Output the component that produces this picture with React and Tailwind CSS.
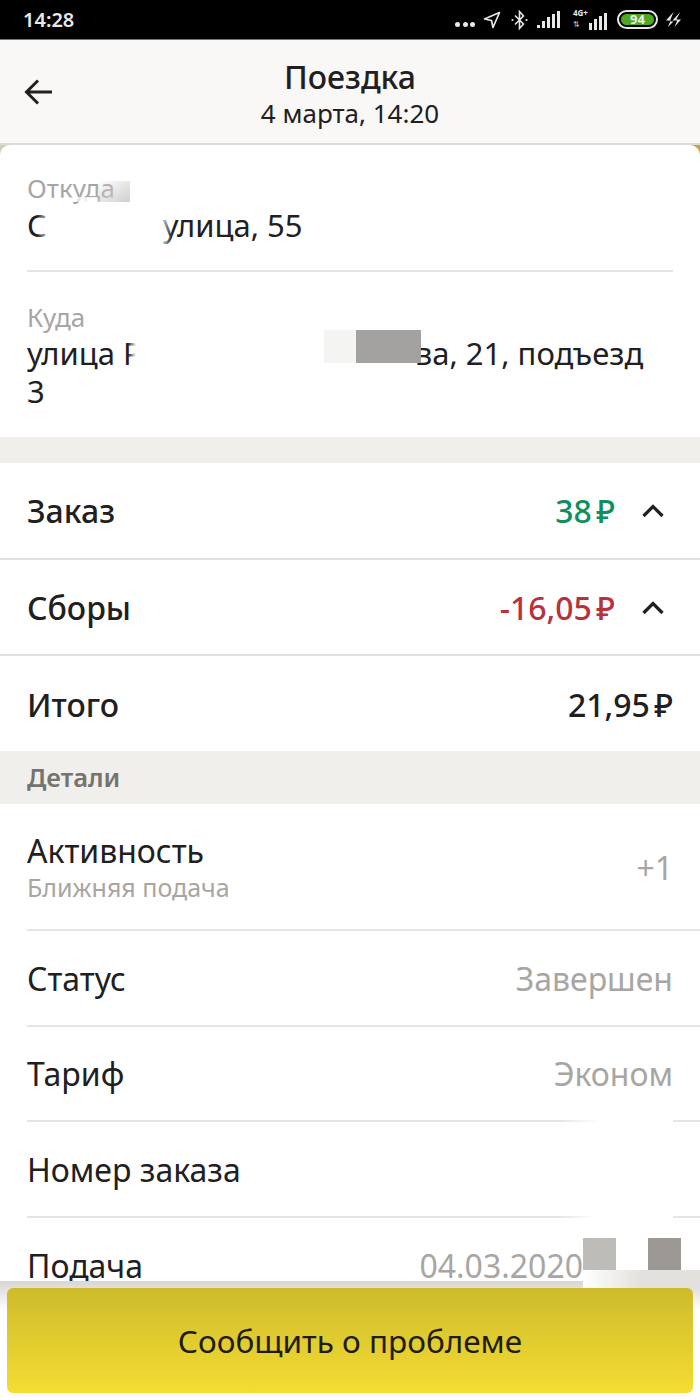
import React from 'react'

const font = { fontFamily: '"Noto Sans", sans-serif' }

function Blur({ className }) {
  return <div className={`absolute ${className}`} />
}

function Chevron() {
  return (
    <svg width="24" height="16" viewBox="0 0 24 16" className="ml-[26px] mr-[8px] shrink-0" fill="none" stroke="#21201f" strokeWidth="3.2">
      <path d="M2.5 13 L12 3.5 L21.5 13" />
    </svg>
  )
}

function Signal({ bars = 5, className = '' }) {
  const heights = ['h-[3px]', 'h-[7px]', 'h-[11px]', 'h-[14px]', 'h-[17px]'].slice(5 - bars)
  return (
    <div className={`flex items-end gap-[2px] h-[17px] ${className}`}>
      {heights.map(h => <span key={h} className={`w-[3px] bg-[#e8e8e8] ${h}`} />)}
    </div>
  )
}

function StatusBar() {
  return (
    <div className="h-10 bg-black flex items-center justify-between pl-[23px] pr-[18px] text-[#e8e8e8] border-b border-[#777]">
      <span className="text-[20px] font-semibold leading-none">14:28</span>
      <div className="flex items-center">
        <div className="flex gap-[2.5px] mt-[10px]">
          <span className="w-[5px] h-[5px] rounded-full bg-[#e8e8e8]" />
          <span className="w-[5px] h-[5px] rounded-full bg-[#e8e8e8]" />
          <span className="w-[5px] h-[5px] rounded-full bg-[#e8e8e8]" />
        </div>
        <svg width="18" height="18" viewBox="0 0 18 18" className="ml-[8px]" fill="none" stroke="#e8e8e8" strokeWidth="1.7">
          <path d="M16.5 1.5 L1.5 8 L8.5 9.5 L10 16.5 Z" strokeLinejoin="round" />
        </svg>
        <svg width="17" height="22" viewBox="0 0 17 22" className="ml-[10px]" fill="none" stroke="#e8e8e8" strokeWidth="1.6">
          <path d="M4 6.5 L12.5 15 L8.5 19.5 V2.5 L12.5 7 L4 15.5" />
          <circle cx="1.5" cy="11" r="1.1" fill="#e8e8e8" stroke="none" />
          <circle cx="15.5" cy="11" r="1.1" fill="#e8e8e8" stroke="none" />
        </svg>
        <Signal className="ml-[9px]" />
        <div className="ml-[12px] relative w-[35px] h-[20px]">
          <span className="absolute left-[1px] top-[-2px] text-[8px] font-bold leading-[10px] text-[#e8e8e8]">4G+</span>
          <span className="absolute left-[1px] top-[9px] text-[8px] leading-[9px] text-[#bbb]">⇅</span>
          <Signal bars={4} className="absolute right-0 bottom-0" />
        </div>
        <div className="ml-[10px] w-[41px] h-[19px] rounded-full border-2 border-[#e8e8e8] flex items-center justify-center p-[2px]">
          <div className="w-full h-full rounded-full bg-[#4ea821] flex items-center justify-center text-[13px] font-bold text-[#eee] leading-none">94</div>
        </div>
        <svg width="17" height="17" viewBox="0 0 18 18" className="ml-[7px]" fill="#e8e8e8">
          <path d="M9 1 L1 10 H6 L3 17 L9 11 H5 Z" />
          <path d="M16 1 L8 10 H13 L10 17 L17 9 H12 Z" />
        </svg>
      </div>
    </div>
  )
}

function MoneyRow({ label, value, color, open }) {
  return (
    <div className="flex items-center h-[96.5px] pt-[2px] pl-[27px] pr-[27px] border-b-2 border-[#e2e1dd]">
      <span className="text-[32px] font-medium text-[#21201f] flex-1">{label}</span>
      <span className={`text-[32px] font-medium [word-spacing:-4px] ${color}`}>{value}</span>
      {open && <Chevron />}
    </div>
  )
}

function DetailRow({ label, sub, value, last, valueGap = 'pr-[27px]' }) {
  return (
    <div className={`ml-[27px] flex items-center justify-between pt-[2px] ${last ? '' : 'border-b-2 border-[#e6e5e2]'} ${sub ? 'h-[127px]' : 'h-[95.5px]'}`}>
      <div>
        <div className="text-[32px] leading-[38px] text-[#21201f]">{label}</div>
        {sub && <div className="text-[25px] leading-[34px] text-[#a8a6a3]">{sub}</div>}
      </div>
      <span className={`text-[32px] text-[#a8a6a3] ${valueGap}`}>{value}</span>
    </div>
  )
}

export default function App() {
  return (
    <div className="relative w-[700px] h-[1400px] overflow-hidden bg-white" style={font}>
      <StatusBar />

      {/* Header */}
      <div className="relative h-[105px] bg-[#f9f8f6] border-b-2 border-[#dddcd6] flex flex-col items-center pt-[17px]">
        <svg width="30" height="30" viewBox="0 0 30 30" className="absolute left-[24px] top-[37px]" fill="none" stroke="#21201f" strokeWidth="3">
          <path d="M28 15 H3 M14 3.5 L2.5 15 L14 26.5" />
        </svg>
        <div className="text-[32px] leading-[40px] font-medium text-[#21201f]">Поездка</div>
        <div className="text-[26px] leading-[32px] text-[#21201f]">4 марта, 14:20</div>
      </div>

      {/* Addresses, the map shows through at the rounded corners */}
      <div className="bg-gradient-to-r from-[#cfd0bc] via-white to-[#c9a23e]">
        <div className="relative rounded-t-[10px] bg-white">
          <div className="mx-[27px] h-[127px] pt-[27px] border-b-2 border-[#e6e5e2]">
            <div className="text-[26px] leading-[32px] text-[#a8a6a3]">Откуда</div>
            <div className="text-[31px] leading-[42px] text-[#21201f]">
              С<span className="inline-block w-[116px]" />улица, 55
            </div>
          </div>
          <div className="mx-[27px] h-[165px] pt-[28px] pr-[20px]">
            <div className="text-[26px] leading-[34px] text-[#a8a6a3]">Куда</div>
            <div className="text-[31px] leading-[38px] text-[#21201f]">
              улица Р<span className="inline-block w-[273px]" />ва, 21, подъезд 3
            </div>
          </div>
          {/* Smudged parts of the addresses */}
          <Blur className="left-[45px] top-[52px] w-[52px] h-[5px] bg-gradient-to-r from-transparent to-white" />
          <Blur className="left-[97px] top-[36px] w-[33px] h-[21px] bg-gradient-to-br from-transparent to-[#cfcfcd]" />
          <Blur className="left-[37px] top-[60px] w-[14px] h-[44px] bg-gradient-to-r from-transparent to-white" />
          <Blur className="left-[160px] top-[60px] w-[12px] h-[44px] bg-gradient-to-r from-white to-transparent" />
          <Blur className="left-[128px] top-[186px] w-[20px] h-[40px] bg-gradient-to-r from-transparent to-white to-[40%]" />
          <Blur className="left-[324px] top-[185px] w-[32px] h-[33px] bg-[#f4f4f3]" />
          <Blur className="left-[356px] top-[185px] w-[65px] h-[33px] bg-[#a3a2a0]" />
        </div>
      </div>

      <div className="h-[26px] bg-[#f0efec]" />

      <MoneyRow label="Заказ" value="38 ₽" color="text-[#0e8f5c]" open />
      <MoneyRow label="Сборы" value="-16,05 ₽" color="text-[#b8323a]" open />
      <div className="flex items-center justify-between h-[95px] pt-[2px] px-[27px]">
        <span className="text-[32px] font-medium text-[#21201f]">Итого</span>
        <span className="text-[32px] font-medium [word-spacing:-4px] text-[#21201f]">21,95 ₽</span>
      </div>

      <div className="h-[53px] bg-[#f0efec] flex items-center pl-[27px] text-[25.5px] font-semibold text-[#75736f]">Детали</div>

      <DetailRow label="Активность" sub="Ближняя подача" value="+1" />
      <DetailRow label="Статус" value="Завершен" />
      <DetailRow label="Тариф" value="Эконом" />
      <DetailRow label="Номер заказа" value="" />
      <DetailRow label="Подача" value="04.03.2020" valueGap="pr-[117px]" last />

      {/* Smudges over the dividers and the Подача row */}
      <Blur className="left-[560px] top-[1119px] w-[113px] h-[5px] bg-gradient-to-r from-transparent to-white to-[35%]" />
      <Blur className="left-[560px] top-[1215px] w-[113px] h-[5px] bg-gradient-to-r from-transparent to-white to-[30%]" />
      <Blur className="left-[583px] top-[1238px] w-[33px] h-[32px] bg-[#bdbcb8]" />
      <Blur className="left-[648px] top-[1238px] w-[33px] h-[32px] bg-[#9c9995]" />

      {/* Bottom button */}
      <div className="absolute left-0 right-0 top-[1281px] bottom-0 bg-gradient-to-b from-[#d8d7d4] to-white to-[25%] px-[7px] pt-[7px]">
        <div className="h-[105px] rounded-[6px] bg-gradient-to-b from-[#cdbb2c] to-[#f5dd33] flex items-center justify-center text-[31.5px] text-[#1f1c0c]">
          Сообщить о проблеме
        </div>
      </div>
      <Blur className="left-[583px] top-[1270px] w-[117px] h-[18px] bg-gradient-to-r from-white via-[#e2e1dd] to-[#e2e1dd]" />
    </div>
  )
}
